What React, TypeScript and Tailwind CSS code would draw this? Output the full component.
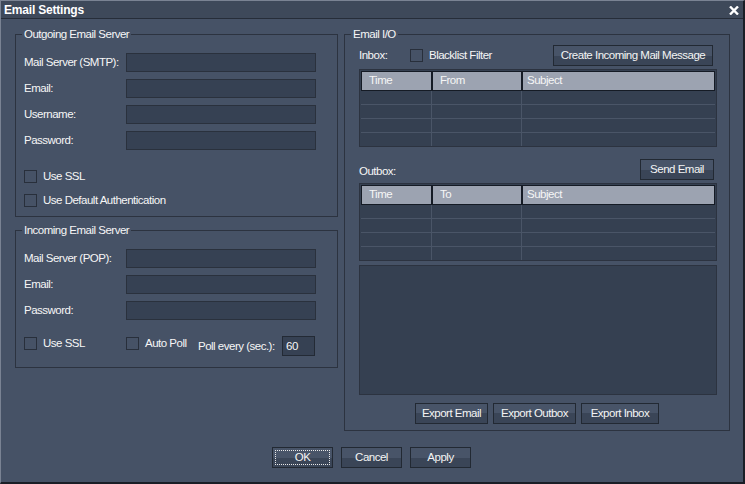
import React from "react";

function Btn({
  children,
  className = "",
  focus = false,
}: {
  children: React.ReactNode;
  className?: string;
  focus?: boolean;
}) {
  return (
    <div
      className={`h-[21px] flex items-center justify-center whitespace-nowrap border border-[#222933] bg-[linear-gradient(#485468_50%,#3a4557_50%)] text-[#f4f4f4] leading-[15px] ${
        focus ? "outline outline-1 outline-dotted outline-[#e8e8e8] outline-offset-[-4px]" : ""
      } ${className}`}
    >
      {children}
    </div>
  );
}

function Check({ label, className = "" }: { label: string; className?: string }) {
  return (
    <div className={`flex items-center gap-[6px] whitespace-nowrap ${className}`}>
      <div className="w-[13px] h-[13px] border border-[#282f3b] shrink-0" />
      <span className="leading-[15px]">{label}</span>
    </div>
  );
}

function Field({ label }: { label: string }) {
  return (
    <div className="flex items-center h-[19px]">
      <span className="w-[102px] leading-[15px] whitespace-nowrap">{label}</span>
      <div className="w-[190px] h-[19px] border border-[#2a313d] bg-[#364153]" />
    </div>
  );
}

function Table({ cols }: { cols: string[] }) {
  const rows = [0, 1, 2, 3];
  return (
    <div className="h-[78px] border border-[#2c3340] bg-[#354051] pt-px px-px flex flex-col">
      <div className="flex h-[20px] shrink-0">
        <div className="w-[71px] border border-[#151b25] bg-[#9ca3b1] pl-[7px] flex items-center">
          {cols[0]}
        </div>
        <div className="w-[90px] border border-[#151b25] bg-[#9ca3b1] pl-[7px] flex items-center">
          {cols[1]}
        </div>
        <div className="flex-1 border border-[#151b25] bg-[#9ca3b1] pl-[4px] flex items-center">
          {cols[2]}
        </div>
      </div>
      {rows.map((r) => (
        <div
          key={r}
          className={`flex ${r < 3 ? "h-[14px] border-b border-[#4a5567]" : "h-[13px]"}`}
        >
          <div className="w-[71px] border-r border-[#4a5567]" />
          <div className="w-[90px] border-r border-[#4a5567]" />
          <div className="flex-1" />
        </div>
      ))}
    </div>
  );
}

export default function App() {
  return (
    <div className="w-[745px] h-[484px] bg-[#465266] border-l border-t border-[#7a8393] border-r-2 border-b-2 border-r-[#1a1e26] border-b-[#1a1e26] font-['Liberation_Sans',sans-serif] text-[11.5px] tracking-[-0.5px] text-[#f6f6f6] flex flex-col overflow-hidden">
      {/* Title bar */}
      <div className="h-[18px] shrink-0 bg-[#3e495a] border-b border-[#262d39] flex items-center justify-between pl-[3px] pr-[4px]">
        <span className="font-bold text-[12px] tracking-[-0.2px] text-white leading-[14px]">
          Email Settings
        </span>
        <svg width="10" height="9" viewBox="0 0 10 9" className="mt-[1px]">
          <path d="M1 0.5 L9 8.5 M9 0.5 L1 8.5" stroke="#ffffff" strokeWidth="2.4" />
        </svg>
      </div>

      {/* Content */}
      <div className="flex pl-[14px] pt-[8px] gap-[6px]">
        {/* Left column */}
        <div className="w-[323px] flex flex-col gap-[6px]">
          <fieldset className="border border-[#2c3340] pl-[8px] pr-[21px] pt-[12px] pb-[9px]">
            <legend className="ml-[-2px] px-[2px] leading-[14px]">Outgoing Email Server</legend>
            <div className="flex flex-col gap-[7px]">
              <Field label="Mail Server (SMTP):" />
              <Field label="Email:" />
              <Field label="Username:" />
              <Field label="Password:" />
            </div>
            <Check label="Use SSL" className="mt-[20px] h-[13px]" />
            <Check label="Use Default Authentication" className="mt-[11px] h-[13px]" />
          </fieldset>

          <fieldset className="border border-[#2c3340] pl-[8px] pr-[21px] pt-[12px] pb-[11px]">
            <legend className="ml-[-2px] px-[2px] leading-[14px]">Incoming Email Server</legend>
            <div className="flex flex-col gap-[7px]">
              <Field label="Mail Server (POP):" />
              <Field label="Email:" />
              <Field label="Password:" />
            </div>
            <div className="flex items-start mt-[16px] h-[20px]">
              <Check label="Use SSL" className="w-[102px] h-[14px]" />
              <Check label="Auto Poll" className="w-[72px] h-[14px]" />
              <div className="flex items-center h-[20px]">
                <span className="w-[84px] leading-[15px] whitespace-nowrap">Poll every (sec.):</span>
                <div className="w-[33px] h-[20px] border border-[#232a35] bg-[#364153] pl-[3px] leading-[18px]">
                  60
                </div>
              </div>
            </div>
          </fieldset>
        </div>

        {/* Right column */}
        <fieldset className="w-[386px] border border-[#2c3340] pl-[14px] pr-[12px] pt-[4px] pb-[6px]">
          <legend className="ml-[-8px] px-[2px] leading-[14px]">Email I/O</legend>
          <div className="flex items-center h-[21px]">
            <span className="w-[51px] leading-[15px]">Inbox:</span>
            <Check label="Blacklist Filter" />
            <Btn className="ml-auto mr-[4px] w-[160px]">Create Incoming Mail Message</Btn>
          </div>
          <div className="mt-[3px]">
            <Table cols={["Time", "From", "Subject"]} />
          </div>
          <div className="flex items-end h-[21px] mt-[12px]">
            <span className="leading-[15px] mb-[1px]">Outbox:</span>
            <Btn className="ml-auto mr-[3px] w-[74px]">Send Email</Btn>
          </div>
          <div className="mt-[3px]">
            <Table cols={["Time", "To", "Subject"]} />
          </div>
          <div className="mt-[4px] h-[130px] border border-[#2c3340] bg-[#354051]" />
          <div className="mt-[8px] flex justify-center gap-[5px] pr-[2px]">
            <Btn className="w-[73px]">Export Email</Btn>
            <Btn className="w-[83px]">Export Outbox</Btn>
            <Btn className="w-[78px]">Export Inbox</Btn>
          </div>
        </fieldset>
      </div>

      {/* Bottom buttons */}
      <div className="mt-[16px] flex justify-center gap-[8px] pr-[1px]">
        <Btn className="w-[61px]" focus>
          OK
        </Btn>
        <Btn className="w-[61px]">Cancel</Btn>
        <Btn className="w-[61px]">Apply</Btn>
      </div>
    </div>
  );
}
